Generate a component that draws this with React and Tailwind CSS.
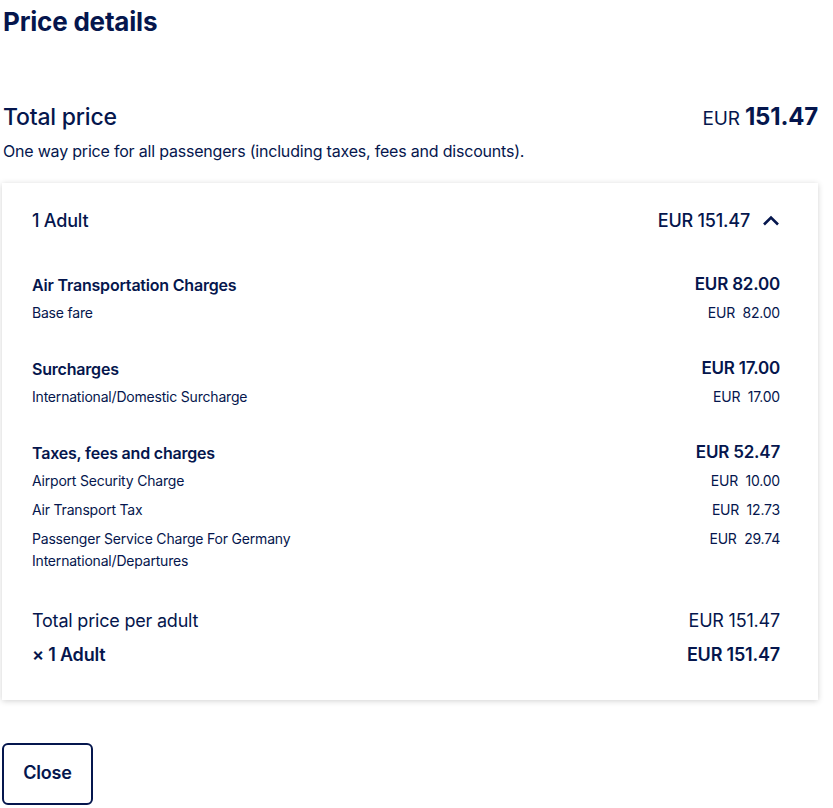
import React from "react";

const navy = "text-[#05164d]";

function Section({ title, total, items }) {
  return (
    <div className="flex flex-col">
      <div className="flex justify-between items-center h-[28px]">
        <span className="text-[16px] font-semibold">{title}</span>
        <span className="text-[17px] font-semibold">{total}</span>
      </div>
      <div className="mt-[3px] flex flex-col gap-[7px]">
        {items.map((it, i) => (
          <div key={i} className="flex justify-between items-start text-[14px] leading-[22px]">
            <span>{it[0]}{it[2] ? <><br />{it[2]}</> : null}</span>
            <span className="whitespace-pre">{it[1]}</span>
          </div>
        ))}
      </div>
    </div>
  );
}

export default function App() {
  return (
    <div className={`w-[833px] min-h-[808px] bg-white ${navy} tracking-[-0.2px]`} style={{ fontFamily: "Inter, 'Noto Sans', sans-serif" }}>
      <div className="w-[816px] ml-[2px]">
        <h1 className="text-[26px] font-bold leading-[32px] pt-[6px] ml-[1px] tracking-[-0.2px]">Price details</h1>
        <div className="mt-[64px] flex justify-between items-baseline">
          <span className="text-[23px] font-medium leading-[30px] ml-[1px]">Total price</span>
          <span className="leading-[30px]">
            <span className="text-[19px]">EUR </span>
            <span className="text-[24px] font-bold">151.47</span>
          </span>
        </div>
        <p className="text-[16px] leading-[22px] mt-[6px] ml-[1px]">One way price for all passengers (including taxes, fees and discounts).</p>
        <div className="mt-[21px] bg-white shadow-[0_1px_6px_rgba(0,0,0,0.18)] pl-[30px] pr-[38px] pt-[24px] pb-[28px]">
          <div className="flex justify-between items-center h-[26px]">
            <span className="text-[18px] font-medium">1 Adult</span>
            <span className="flex items-center gap-[12px]">
              <span className="text-[18px] font-medium">EUR 151.47</span>
              <svg width="18" height="12" viewBox="0 0 18 12" fill="none" stroke="#05164d" strokeWidth="2.6">
                <path d="M2 10.5 L9 3.5 L16 10.5" />
              </svg>
            </span>
          </div>
          <div className="mt-[38px] flex flex-col gap-[31px]">
            <Section title="Air Transportation Charges" total="EUR 82.00" items={[["Base fare", "EUR  82.00"]]} />
            <Section title="Surcharges" total="EUR 17.00" items={[["International/Domestic Surcharge", "EUR  17.00"]]} />
            <Section
              title="Taxes, fees and charges"
              total="EUR 52.47"
              items={[
                ["Airport Security Charge", "EUR  10.00"],
                ["Air Transport Tax", "EUR  12.73"],
                ["Passenger Service Charge For Germany", "EUR  29.74", "International/Departures"],
              ]}
            />
          </div>
          <div className="mt-[32px] flex justify-between text-[18px] leading-[34px]">
            <span>Total price per adult</span>
            <span>EUR 151.47</span>
          </div>
          <div className="flex justify-between text-[18px] font-semibold leading-[34px]">
            <span>× 1 Adult</span>
            <span>EUR 151.47</span>
          </div>
        </div>
        <button className="mt-[43px] h-[62px] w-[91px] border-2 border-[#05164d] rounded-[6px] text-[18px] font-semibold bg-white pb-[3px]">
          Close
        </button>
      </div>
    </div>
  );
}
